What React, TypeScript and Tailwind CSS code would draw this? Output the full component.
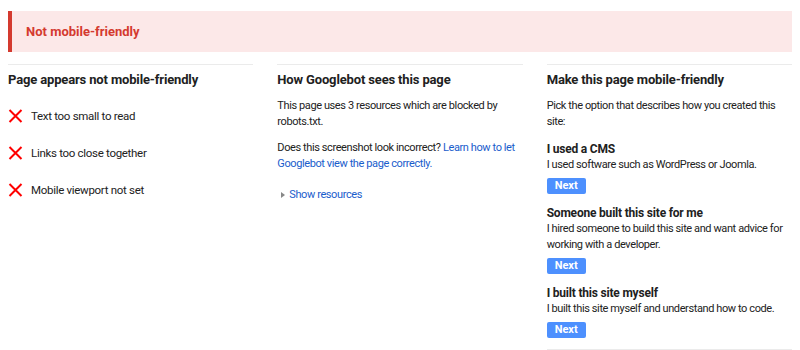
import React from "react";

const XIcon = () => (
  <svg width="15" height="14" viewBox="0 0 15 14" className="shrink-0">
    <path d="M1.5 1 L13.5 13 M13.5 1 L1.5 13" stroke="#ff0000" strokeWidth="2" strokeLinecap="butt" />
  </svg>
);

const NextBtn = () => (
  <button className="mt-[5px] block h-[16px] w-[39px] rounded-[2px] bg-[#4d90fe] text-[11px] font-bold leading-[16px] text-white">
    Next
  </button>
);

const body = "text-[11px] leading-[16px] tracking-[-0.4px]";
const sub = "text-[12px] font-bold leading-[16px] tracking-[-0.2px] text-[#212121]";
const h2 = "mt-[6px] text-[13px] font-bold leading-[18px] tracking-[-0.15px] text-[#212121]";

export default function App() {
  return (
    <div className="h-[350px] w-[800px] overflow-hidden bg-white px-2 pt-[11px] text-[#222] [font-family:Roboto,'Liberation_Sans',sans-serif]">
      <div className="flex h-[41px] items-center border-l-4 border-[#d43a2f] bg-[#fce8e8] pl-[14px]">
        <span className="text-[13px] font-bold text-[#d43a2f]">Not mobile-friendly</span>
      </div>
      <div className="mt-[12px] grid grid-cols-3 gap-x-[24px]">
        <div className="border-t border-[#ebebeb]">
          <h2 className={h2}>Page appears not mobile-friendly</h2>
          <div className="mt-[19px] flex flex-col gap-[21px]">
            {["Text too small to read", "Links too close together", "Mobile viewport not set"].map((t) => (
              <div key={t} className="flex h-[16px] items-center gap-[8px]">
                <XIcon />
                <span className="text-[11.5px] leading-[16px] tracking-[-0.3px] text-[#222]">{t}</span>
              </div>
            ))}
          </div>
        </div>
        <div className="border-t border-[#ebebeb]">
          <h2 className={h2}>How Googlebot sees this page</h2>
          <p className={`mt-[9px] ${body}`}>This page uses 3 resources which are blocked by robots.txt.</p>
          <p className={`mt-[10px] ${body}`}>
            Does this screenshot look incorrect?{" "}
            <span className="text-[#1a5dcc]">Learn how to let Googlebot view the page correctly.</span>
          </p>
          <div className="mt-[15px] flex items-center gap-[4px] pl-[4px]">
            <svg width="4" height="6" viewBox="0 0 4 6">
              <path d="M0 0 L4 3 L0 6 Z" fill="#888" />
            </svg>
            <span className={`${body} text-[#1a5dcc]`}>Show resources</span>
          </div>
        </div>
        <div className="border-y border-[#ebebeb] pb-[11px]">
          <h2 className={h2}>Make this page mobile-friendly</h2>
          <p className={`mt-[9px] ${body}`}>Pick the option that describes how you created this site:</p>
          <div className="mt-[11px]">
            <div className={sub}>I used a CMS</div>
            <p className={body}>I used software such as WordPress or Joomla.</p>
            <NextBtn />
          </div>
          <div className="mt-[11px]">
            <div className={sub}>Someone built this site for me</div>
            <p className={body}>I hired someone to build this site and want advice for working with a developer.</p>
            <NextBtn />
          </div>
          <div className="mt-[11px]">
            <div className={sub}>I built this site myself</div>
            <p className={body}>I built this site myself and understand how to code.</p>
            <NextBtn />
          </div>
        </div>
      </div>
    </div>
  );
}
